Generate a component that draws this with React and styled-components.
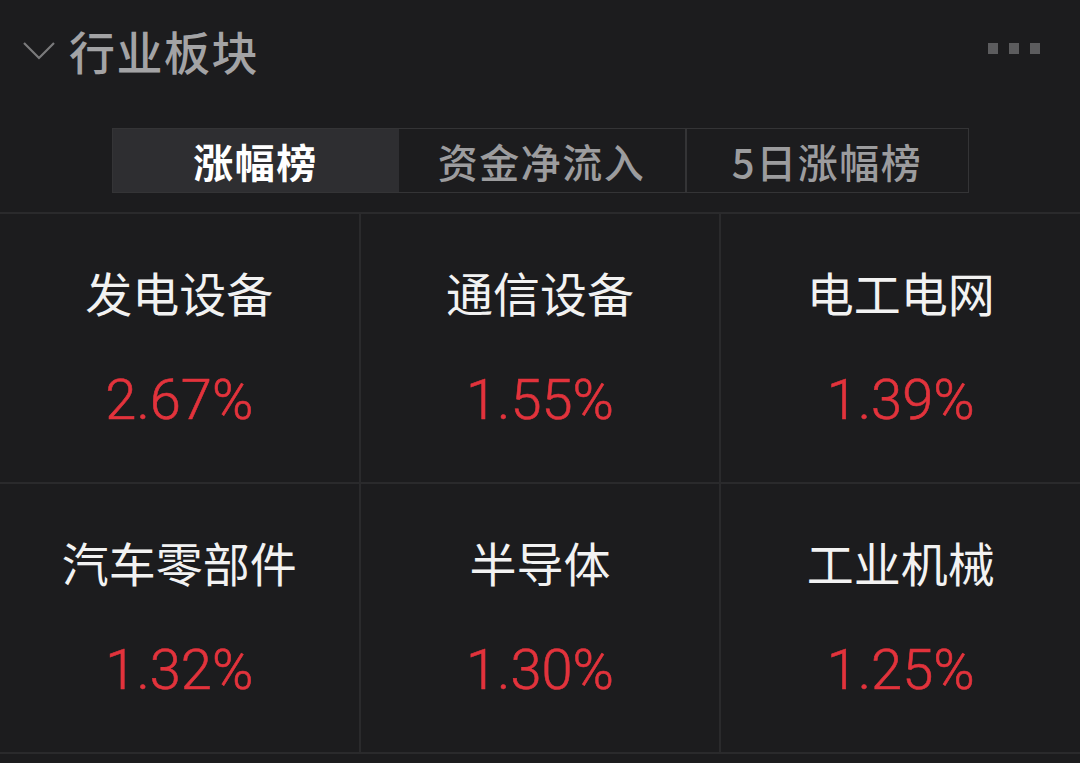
import React, { useState } from 'react';
import styled, { createGlobalStyle } from 'styled-components';

const GlobalStyle = createGlobalStyle`
  html, body {
    margin: 0;
    padding: 0;
    background: #1c1c1e;
  }
  body {
    font-family: "Noto Sans CJK SC", "Noto Sans", sans-serif;
  }
`;

const tabs = ['涨幅榜', '资金净流入', '5日涨幅榜'];

const sectors = [
  { name: '发电设备', change: '2.67%' },
  { name: '通信设备', change: '1.55%' },
  { name: '电工电网', change: '1.39%' },
  { name: '汽车零部件', change: '1.32%' },
  { name: '半导体', change: '1.30%' },
  { name: '工业机械', change: '1.25%' },
];

const App = () => {
  const [active, setActive] = useState(0);

  return (
    <Page>
      <GlobalStyle />
      <Header>
        <TitleGroup>
          <Chevron viewBox="0 0 34 20">
            <path d="M2 2 L17 17 L32 2" fill="none" stroke="#7a7a7c" strokeWidth="2.2" />
          </Chevron>
          <Title>行业板块</Title>
        </TitleGroup>
        <More>
          <Dot />
          <Dot />
          <Dot />
        </More>
      </Header>

      <TabBar>
        {tabs.map((t, i) => (
          <Tab key={t} active={i === active} divider={i === 2} onClick={() => setActive(i)}>
            {t}
          </Tab>
        ))}
      </TabBar>

      <Grid>
        {sectors.map((s) => (
          <Cell key={s.name}>
            <Name>{s.name}</Name>
            <Change>{s.change}</Change>
          </Cell>
        ))}
      </Grid>
    </Page>
  );
};

export default App;

const Page = styled.div`
  width: 1080px;
  height: 763px;
  background: #1c1c1e;
  overflow: hidden;
`;

const Header = styled.div`
  height: 100px;
  display: flex;
  align-items: center;
  justify-content: space-between;
  padding: 0 40px 0 22px;
`;

const TitleGroup = styled.div`
  display: flex;
  align-items: center;
  gap: 13px;
`;

const Chevron = styled.svg`
  width: 34px;
  height: 20px;
  margin-top: 2px;
`;

const Title = styled.div`
  font-size: 46px;
  line-height: 1;
  color: #a3a3a5;
  font-weight: 500;
  letter-spacing: 1.5px;
`;

const More = styled.div`
  display: flex;
  gap: 11px;
  align-items: center;
  margin-top: -4px;
`;

const Dot = styled.span`
  width: 10px;
  height: 11px;
  background: #5c5c5e;
`;

const TabBar = styled.div`
  margin: 28px auto 0;
  width: 855px;
  height: 63px;
  display: grid;
  grid-template-columns: 286px 286px 1fr;
  border: 1px solid #343436;
  background: #1c1c1e;
`;

const Tab = styled.div`
  display: flex;
  align-items: center;
  justify-content: center;
  font-size: 40px;
  letter-spacing: 1.5px;
  cursor: pointer;
  color: ${(p) => (p.active ? '#ffffff' : '#9c9c9e')};
  font-weight: ${(p) => (p.active ? 700 : 500)};
  background: ${(p) => (p.active ? '#2e2e31' : 'transparent')};
  border-left: ${(p) => (p.divider ? '2px solid #343436' : 'none')};
`;

const Grid = styled.div`
  margin-top: 19px;
  display: grid;
  grid-template-columns: repeat(3, 1fr);
  gap: 2px;
  background: #2a2a2c;
  border-top: 2px solid #2a2a2c;
  border-bottom: 2px solid #2a2a2c;
`;

const Cell = styled.div`
  height: 268px;
  background: #1c1c1e;
  display: flex;
  flex-direction: column;
  align-items: center;
  padding-top: 50px;
  box-sizing: border-box;
`;

const Name = styled.div`
  font-size: 47px;
  line-height: 56px;
  color: #f2f2f2;
  font-weight: 400;
`;

const Change = styled.div`
  margin-top: 48px;
  font-family: Roboto, "Noto Sans", sans-serif;
  font-weight: 300;
  font-size: 56px;
  line-height: 64px;
  color: #e2333c;
  -webkit-text-stroke: 0.6px #e2333c;
`;
